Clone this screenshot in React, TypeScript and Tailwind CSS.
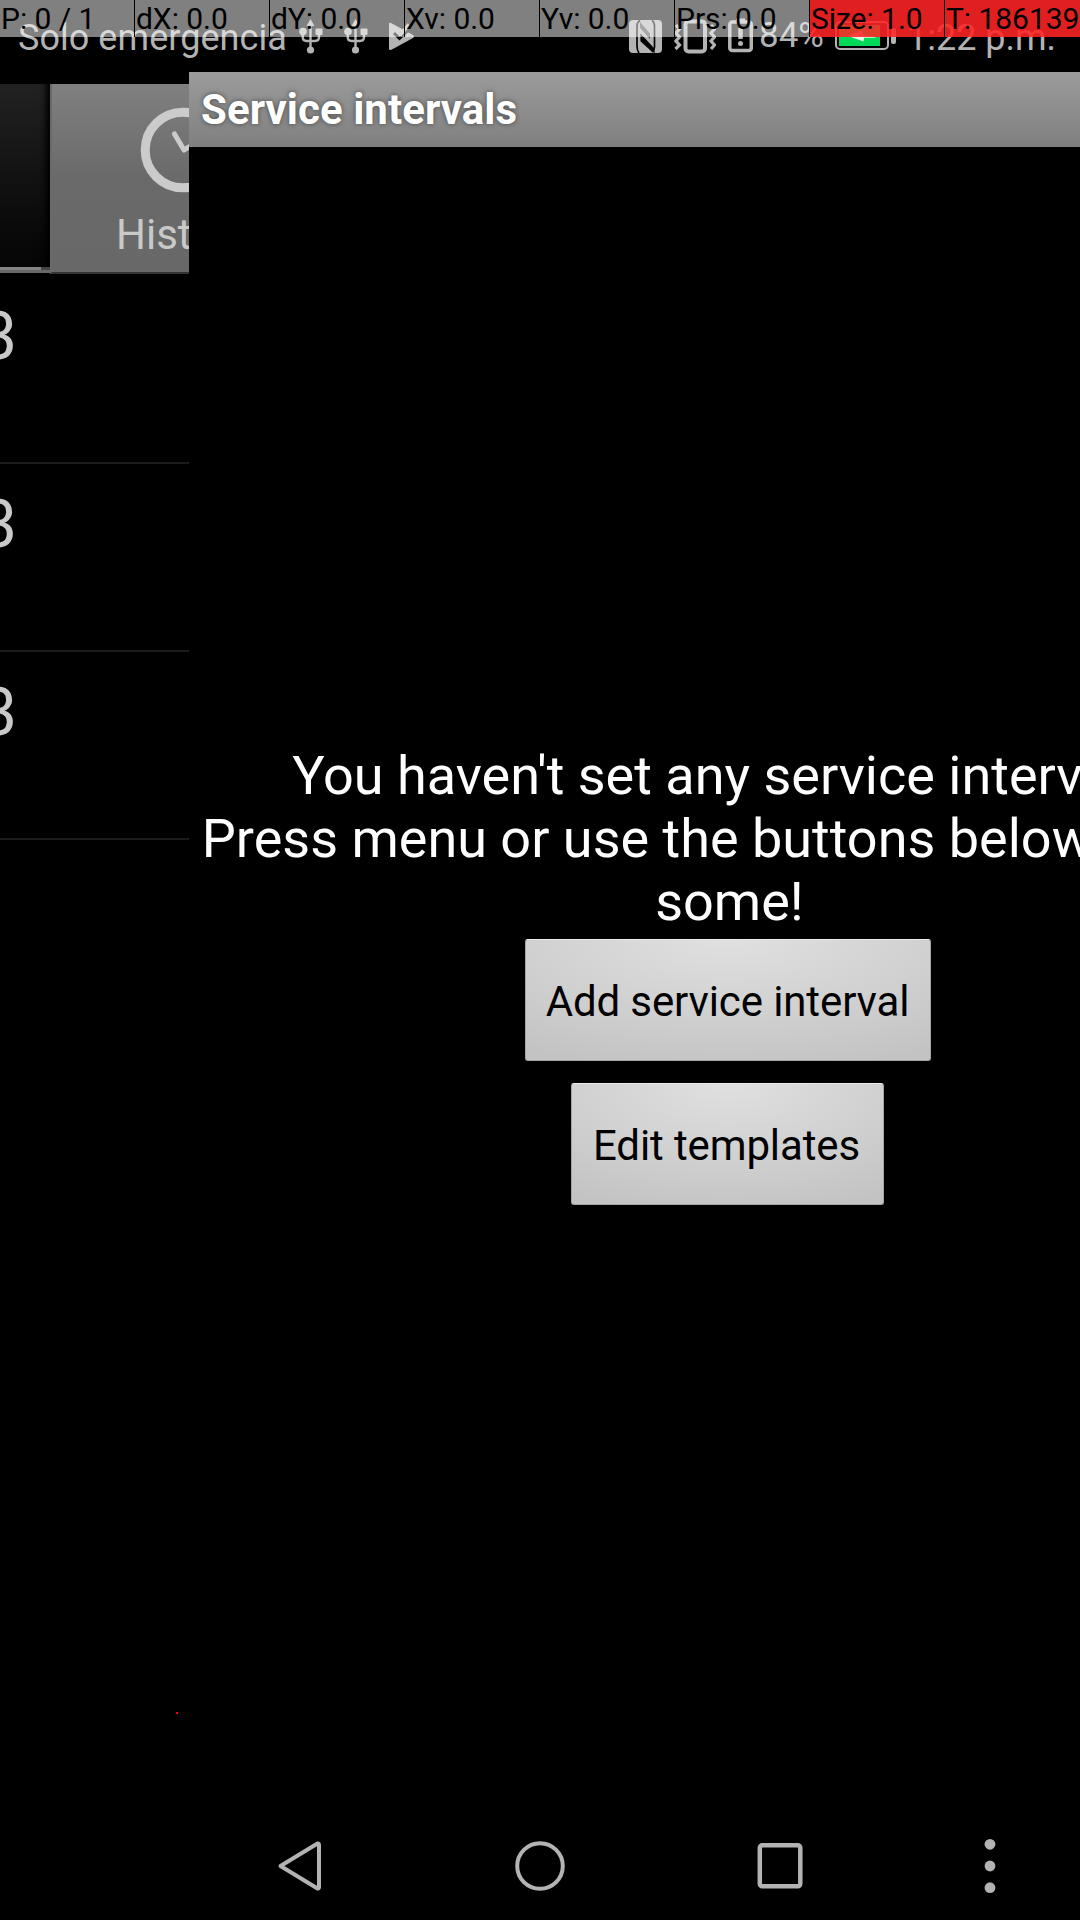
import React from "react";

const pointerCells = ["P: 0 / 1", "dX: 0.0", "dY: 0.0", "Xv: 0.0", "Yv: 0.0", "Prs: 0.0", "Size: 1.0", "T: 186139"];

function PointerBar() {
  return (
    <div className="absolute inset-x-0 top-0 z-10 grid h-[37px] grid-cols-8 text-[30px] leading-[37px] tracking-[-0.05px] text-black">
      {pointerCells.map((t, i) => (
        <div
          key={t}
          className={
            (i > 5 ? "bg-[#ff2424]/88 " : "bg-white/50 ") +
            (i < 7 ? "border-r border-black " : "") +
            "overflow-hidden whitespace-nowrap pl-px"
          }
        >
          {t}
        </div>
      ))}
    </div>
  );
}

function Usb() {
  return (
    <svg className="h-[72px] w-6" viewBox="0 0 24 72" fill="none" stroke="#b3b3b3" strokeWidth="2.4">
      <path d="M11.500 24V50" />
      <path d="M3.700 32V37Q3.700 41 7.500 41H16Q20 41 20 37V32" />
      <path d="M11.500 19L15.500 26H7.500Z" fill="#b3b3b3" stroke="none" />
      <circle cx="4" cy="31.500" r="3.800" fill="#b3b3b3" stroke="none" />
      <rect x="16.500" y="28.500" width="7" height="6.500" rx="1" fill="#b3b3b3" stroke="none" />
      <circle cx="11.500" cy="50" r="3.600" fill="#b3b3b3" stroke="none" />
    </svg>
  );
}

function StatusBar() {
  return (
    <div className="flex h-[72px] items-start whitespace-nowrap text-[#b3b3b3]">
      <div className="w-[299px] pl-[18px] pt-[17px] text-[36px] leading-[42px] tracking-[0.05px]">Solo emergencia</div>
      <Usb />
      <div className="w-[21px]" />
      <Usb />
      <svg className="ml-5 h-[72px] w-[28px]" viewBox="388 0 28 72">
        <path d="M389 24Q389 22 391 23L413 35Q415 36.500 413 38L391 50Q389 50.500 389 48.500Z" fill="#b3b3b3" />
        <path d="M394 33L399.500 38.500L410 28.500" fill="none" stroke="#000" strokeWidth="3" />
        <path d="M398 32L401 34L409 24.500" fill="none" stroke="#b3b3b3" strokeWidth="3.500" />
      </svg>
      <svg className="ml-[213px] h-[72px] w-[33px]" viewBox="629 0 33 72">
        <rect x="629" y="20" width="33" height="33" rx="4" fill="#b3b3b3" />
        <path d="M639 53Q637 50 637 46V26Q637 22 640 20.500M652 20.500Q654.500 22 654.500 26V47Q654.500 50 652 52" fill="none" stroke="#000" strokeWidth="1.700" />
        <path d="M640 22L650 33.500V39L640 28Z" fill="#000" opacity=".55" />
        <path d="M641 35L654 49V52L652 51L641 41Z" fill="#000" stroke="#000" strokeWidth="1.200" />
      </svg>
      <svg className="ml-[12px] h-[72px] w-[42px]" viewBox="674 0 42 72" fill="none" stroke="#b3b3b3">
        <rect x="685.500" y="21.500" width="19.500" height="30" rx="3" strokeWidth="4" />
        <path d="M676 25L679.500 29L676 33L679.500 37L676 41L679.500 45L675.500 49M711 25L714.500 29L711 33L714.500 37L711 41L714.500 45L711 49" strokeWidth="3.2" />
      </svg>
      <svg className="ml-[12px] h-[72px] w-[25px]" viewBox="728 0 25 72" fill="none" stroke="#b3b3b3">
        <rect x="729.800" y="22" width="21.500" height="28.500" rx="2.500" strokeWidth="3.500" />
        <path d="M736 20H745" strokeWidth="3" />
        <path d="M740.500 28V39" strokeWidth="4.500" />
        <circle cx="740.500" cy="43.500" r="2.500" fill="#b3b3b3" stroke="none" />
      </svg>
      <div className="w-[82px] pl-[6px] pt-[15px] text-[35px] leading-[41px]">84%</div>
      <svg className="h-[72px] w-[62px]" viewBox="835 0 62 72">
        <rect x="836" y="22" width="52" height="27" rx="4" fill="none" stroke="#b3b3b3" strokeWidth="2" />
        <rect x="839" y="25" width="41" height="21" fill="#00d95a" />
        <path d="M848 36L862 30.500L863.500 35.200L875.500 36.800V37.800H864L863.500 41.500Z" fill="#e6ffe6" />
        <rect x="891" y="28" width="5" height="16" rx="2" fill="#b3b3b3" />
      </svg>
      <div className="pl-[10px] pt-[17px] text-[36px] leading-[42px]">1:22 p.m.</div>
    </div>
  );
}

function PreviousScreen() {
  return (
    <div className="h-full w-[189px] shrink-0 overflow-hidden pt-3 text-[#c9c9c9]">
      <div className="flex h-[192px]">
        <div className="flex w-[50px] shrink-0 flex-col">
          <div className="h-[183px] bg-linear-to-b from-[#222] to-[#050505] shadow-[inset_-8px_0_6px_-4px_#000]" />
          <div className="h-[3px] bg-linear-to-r from-[#858285] from-82% to-[#444] to-82%" />
          <div className="h-[3px] bg-[#686868]" />
        </div>
        <div className="h-[190px] w-[139px] shrink-0 overflow-hidden border-b-2 border-l-2 border-b-[#333] border-l-[#6a6a6a] bg-linear-to-b from-[#808080] via-[#6a6a6a] to-[#686868]">
          <div className="ml-[88px] h-[110px] w-[60px] pt-[18px]">
            <svg className="h-[92px] w-[100px]" viewBox="140 102 100 92" fill="none" stroke="#cbcbcb">
              <circle cx="183" cy="150" r="37.800" strokeWidth="9" />
              <path d="M174.500 134L184 150L197 142" strokeWidth="5" strokeLinecap="round" strokeLinejoin="round" />
            </svg>
          </div>
          <div className="pl-[64px] pt-[16px] text-[42px] leading-[49px]">History</div>
        </div>
      </div>
      {[0, 1, 2].map((k) => (
        <div key={k} className="flex h-[188px] border-b-2 border-[#1c1c1c] pt-[22px] text-[66px] leading-[78px]">
          <span className="-ml-[20px]">3</span>
        </div>
      ))}
    </div>
  );
}

function PanelButton({ children, className }: { children: React.ReactNode; className: string }) {
  return (
    <button
      className={
        "h-[122px] rounded-[3px] border border-[#a5a5a5] border-t-[#eee] bg-[radial-gradient(ellipse_90%_110%_at_50%_0%,#e0e0e0_0%,#d2d2d2_50%,#c3c3c3_100%)] pt-[2px] text-[42px] leading-[49px] tracking-[-0.12px] text-black " +
        className
      }
    >
      {children}
    </button>
  );
}

function ServiceIntervals() {
  return (
    <div className="h-full w-[1080px] shrink-0 bg-black">
      <div className="h-[75px] bg-linear-to-b from-[#9b9b9b] to-[#808080] pl-3 pt-[13px] text-[42px] font-bold leading-[49px] tracking-[0.06px] text-white [text-shadow:0_0_5px_#444]">
        Service intervals
      </div>
      <div className="flex flex-col items-center pt-[597px]">
        <p className="whitespace-nowrap pl-px text-center text-[54px] leading-[63px] text-white">
          You haven't set any service intervals.
          <br />
          Press menu or use the buttons below to add
          <br />
          some!
        </p>
        <PanelButton className="mr-[2px] mt-[6px] w-[406px] px-0 pr-px">Add service interval</PanelButton>
        <PanelButton className="mr-[3px] mt-[22px] w-[313px] px-0 pr-[2px]">Edit templates</PanelButton>
      </div>
    </div>
  );
}

function NavBar() {
  return (
    <div className="flex h-[126px] items-center pt-[18px]">
      <svg className="ml-[270px] size-[60px]" viewBox="270 1836 60 60" fill="none" stroke="#b3b3b3" strokeWidth="4" strokeLinejoin="round">
        <path d="M280.500 1866L317.500 1843.500Q319 1843 319 1845V1887Q319 1889 317.500 1888.500Z" />
      </svg>
      <svg className="ml-[180px] size-[60px]" viewBox="510 1836 60 60" fill="none" stroke="#b3b3b3" strokeWidth="4">
        <circle cx="540" cy="1866" r="22.800" />
      </svg>
      <svg className="ml-[180px] size-[60px]" viewBox="750 1836 60 60" fill="none" stroke="#b3b3b3" strokeWidth="4.500">
        <rect x="759.800" y="1845.300" width="40.500" height="41" rx="2.500" />
      </svg>
      <svg className="ml-[150px] size-[60px]" viewBox="960 1836 60 60" fill="#b3b3b3">
        <circle cx="990" cy="1844.300" r="5.400" />
        <circle cx="990" cy="1866" r="5.400" />
        <circle cx="990" cy="1887.700" r="5.400" />
      </svg>
    </div>
  );
}

export default function App() {
  return (
    <div className="relative flex h-[1920px] w-[1080px] flex-col overflow-hidden bg-black font-[Roboto,sans-serif]">
      <PointerBar />
      <StatusBar />
      <div className="flex h-[1722px] overflow-hidden">
        <PreviousScreen />
        <ServiceIntervals />
      </div>
      <NavBar />
      <div className="absolute left-[176px] top-[1712px] size-[2px] bg-[#ff0000]" />
    </div>
  );
}
